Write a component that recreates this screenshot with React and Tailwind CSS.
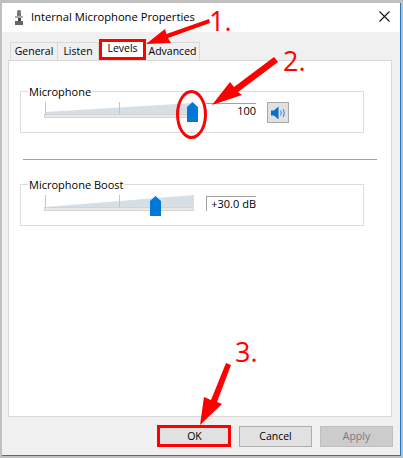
function MicIcon() {
  return (
    <svg width="10" height="16" viewBox="0 0 10 16">
      <rect x="3" y="0" width="4" height="7" rx="1.5" fill="#777" />
      <rect x="1" y="6" width="8" height="2" fill="#aaa" />
      <rect x="4" y="8" width="3" height="4" fill="#444" />
      <rect x="1" y="11" width="8" height="4" fill="#666" />
    </svg>
  );
}

function CloseIcon() {
  return (
    <svg width="11" height="11" viewBox="0 0 11 11">
      <path d="M0.5 0.5 10.500 10.500M10.500 0.5 0.5 10.500" stroke="#111" strokeWidth="1.1" fill="none" />
    </svg>
  );
}

function SpeakerIcon() {
  return (
    <svg width="15" height="14" viewBox="0 0 15 14">
      <path d="M0 4.500h3L7.500 0.500v13L3 9.500H0z" fill="#0b6fc9" />
      <path d="M9.500 4.500c1 1.500 1 3.500 0 5M12 3c1.600 2.400 1.600 5.600 0 8" fill="none" stroke="#1c84dc" strokeWidth="1" />
    </svg>
  );
}

function Slider({ ramp, thumb }) {
  return (
    <div className="relative h-[21px] w-[150px] shrink-0">
      <svg className="absolute left-0 top-0" width="150" height="13" viewBox="0 0 150 13">
        <path d={ramp} fill="#d6dee6" />
        <path d="M1.500 0v13M75.500 0v13" stroke="#c4c4c4" strokeWidth="1" fill="none" />
      </svg>
      <div className="absolute left-0 top-[12px] h-[4px] w-full border border-[#d4d4d4] bg-[#e9e9e9]" />
      <svg className={`absolute ${thumb}`} width="11" height="20" viewBox="0 0 11 20">
        <path d="M0 5 5.500 0 11 5v15H0z" fill="#0078d7" />
      </svg>
    </div>
  );
}

function Group({ title, children }) {
  return (
    <div className="relative ml-[11px] h-[42px] w-[344px] border border-[#dcdcdc] pl-[23px] pt-[10px]">
      <span className="absolute left-[7px] top-[-6px] bg-white px-[1px] text-[11px] leading-[12px] text-black">{title}</span>
      {children}
    </div>
  );
}

function Btn({ children, cls }) {
  return <button className={`flex h-[21px] w-[73px] items-center justify-center border text-[10.5px] ${cls}`}>{children}</button>;
}

export default function App() {
  return (
    <div className="relative h-[458px] w-[403px] overflow-hidden bg-[#c0c0c0] pl-[2px] pt-[3px]" style={{ fontFamily: '"Open Sans", sans-serif' }}>
      <div className="h-[453px] w-[399px] border-b border-r border-[#2079c7] bg-[#f0f0f0]">
        {/* title bar */}
        <div className="flex h-[29px] items-center bg-white pl-[12px] pr-[10px]">
          <MicIcon />
          <span className="ml-[7px] text-[11.2px] text-black">Internal Microphone Properties</span>
          <div className="mb-[3px] ml-auto flex"><CloseIcon /></div>
        </div>

        {/* tabs */}
        <div className="flex h-[28px] items-end pl-[8px] text-[10.5px] text-black">
          <div className="flex h-[18px] w-[48px] items-center justify-center border border-b-0 border-[#d9d9d9]">General</div>
          <div className="flex h-[18px] w-[41px] items-center justify-center border border-b-0 border-l-0 border-[#d9d9d9]">Listen</div>
          <div className="flex h-[21px] w-[47px] items-center justify-center bg-white pb-[2px]">Levels</div>
          <div className="flex h-[18px] w-[54px] items-center justify-center border border-b-0 border-l-0 border-[#d9d9d9]">Advanced</div>
        </div>

        {/* page */}
        <div className="ml-[6px] h-[357px] w-[384px] border border-[#d9d9d9] bg-white pt-[30px]">
          <Group title="Microphone">
            <div className="flex items-start">
              <Slider ramp="M1 10 150 1v11H1z" thumb="left-[143px] top-0" />
              <div className="ml-[12px] mt-[1px] flex h-[15px] w-[50px] shrink-0 items-center justify-end border-t border-[#a0a0a0] text-[11px] text-black">100</div>
              <div className="ml-[11px] flex h-[21px] w-[22px] shrink-0 items-center justify-center border border-[#a8a8a8] bg-[#e1e1e1]"><SpeakerIcon /></div>
            </div>
          </Group>
          <div className="ml-[14px] mt-[26px] w-[354px] border-t border-[#a0a0a0]" />
          <div className="mt-[24px]">
            <Group title="Microphone Boost">
              <div className="flex items-start">
                <Slider ramp="M1 12 150 0v12H1z" thumb="left-[106px] top-[1px]" />
                <div className="ml-[12px] mt-[1px] flex h-[15px] w-[50px] shrink-0 items-center justify-end border-l border-t border-[#a0a0a0] text-[11px] text-black">+30.0 dB</div>
              </div>
            </Group>
          </div>
        </div>

        {/* footer */}
        <div className="flex justify-end gap-[8px] pr-[7px] pt-[9px]">
          <Btn cls="border-[#adadad] bg-[#e1e1e1] text-black">OK</Btn>
          <Btn cls="border-[#adadad] bg-[#e1e1e1] text-black">Cancel</Btn>
          <Btn cls="border-[#bfbfbf] bg-[#cccccc] text-[#7a7a7a]">Apply</Btn>
        </div>
      </div>

      {/* annotations */}
      <div className="absolute left-[99px] top-[39px] h-[21px] w-[47px] border-[3px] border-[#ff0000]" />
      <div className="absolute left-[157px] top-[425px] h-[22px] w-[74px] border-[3px] border-[#ff0000]" />
      <div className="absolute left-[176px] top-[90px] h-[49px] w-[31px] rounded-[50%] border-[3px] border-[#ff0000]" />
      <svg className="absolute left-0 top-0" width="403" height="458" viewBox="0 0 403 458">
        <path d="M146 44 165 29 166.500 34 209 19 210 23 168 38 171 43z" fill="#ff0000" />
        <path d="M212 105 230 82 234 87 274 57 278 62 238 92 242 95z" fill="#ff0000" />
        <path d="M200 425 204 397 211 400 226 363 231 365 217 402 222 404z" fill="#ff0000" />
      </svg>
      <span className="absolute left-[209px] top-[6px] text-[27px] leading-[30px] text-[#ff0000]">1.</span>
      <span className="absolute left-[283px] top-[46px] text-[27px] leading-[30px] text-[#ff0000]">2.</span>
      <span className="absolute left-[235px] top-[337px] text-[27px] leading-[30px] text-[#ff0000]">3.</span>
    </div>
  );
}
